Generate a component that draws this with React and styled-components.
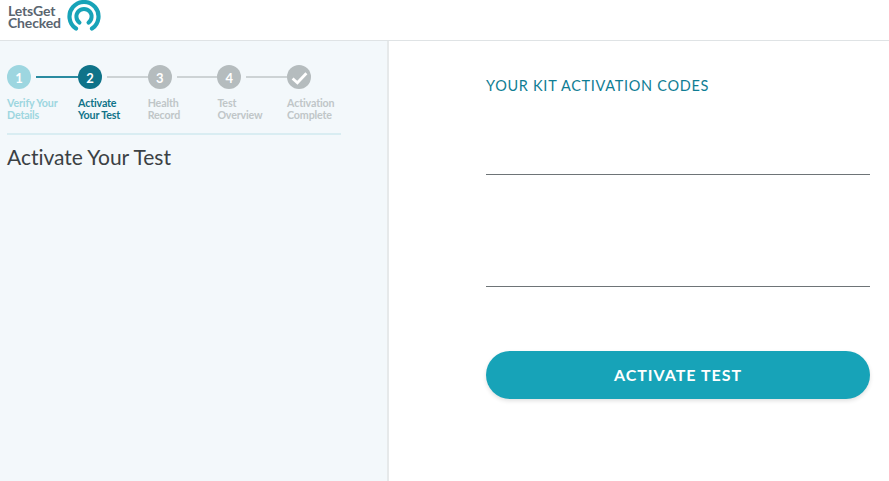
import React from "react";
import styled, { createGlobalStyle } from "styled-components";

const steps = [
  { label: ["Verify Your", "Details"], mark: "1", state: "done" },
  { label: ["Activate", "Your Test"], mark: "2", state: "active" },
  { label: ["Health", "Record"], mark: "3", state: "todo" },
  { label: ["Test", "Overview"], mark: "4", state: "todo" },
  { label: ["Activation", "Complete"], mark: "check", state: "todo" },
];

const circleColors = { done: "#9dd6e0", active: "#0f7389", todo: "#b5bcbe" };
const labelColors = { done: "#9dd6e0", active: "#0f7389", todo: "#c0c6c8" };

export default function App() {
  return (
    <Page>
      <GlobalStyle />
      <Header>
        <LogoText>
          <span>LetsGet</span>
          <span>Checked</span>
        </LogoText>
        <LogoMark viewBox="0 0 34 32" aria-hidden="true">
          <path
            d="M9 28.6 A14.5 14.5 0 1 1 25 28.6"
            fill="none"
            stroke="#17a3b8"
            strokeWidth="4.2"
            strokeLinecap="round"
          />
          <path
            d="M12.5 22.6 A7.6 7.6 0 1 1 21.5 22.6"
            fill="none"
            stroke="#17a3b8"
            strokeWidth="4"
            strokeLinecap="round"
          />
        </LogoMark>
      </Header>
      <Main>
        <Sidebar>
          <Stepper>
            {steps.map((step, i) => (
              <Step key={step.mark}>
                <CircleRow>
                  <Circle $state={step.state}>
                    {step.mark === "check" ? (
                      <svg width="17" height="14" viewBox="0 0 16 13" aria-hidden="true">
                        <path
                          d="M1.5 7 L6 11 L14.5 2"
                          fill="none"
                          stroke="#fff"
                          strokeWidth="2.6"
                        />
                      </svg>
                    ) : (
                      step.mark
                    )}
                  </Circle>
                  {i < steps.length - 1 && <Connector $done={step.state === "done"} />}
                </CircleRow>
                <StepLabel $state={step.state}>
                  {step.label[0]}
                  <br />
                  {step.label[1]}
                </StepLabel>
              </Step>
            ))}
          </Stepper>
          <Title>Activate Your Test</Title>
        </Sidebar>
        <Content>
          <CodesTitle>YOUR KIT ACTIVATION CODES</CodesTitle>
          <CodeField />
          <CodeField />
          <ActivateButton>ACTIVATE TEST</ActivateButton>
        </Content>
      </Main>
    </Page>
  );
}

const GlobalStyle = createGlobalStyle`
  html, body {
    margin: 0;
    padding: 0;
    background: #fff;
  }
  * {
    box-sizing: border-box;
  }
`;

const Page = styled.div`
  width: 889px;
  height: 481px;
  overflow: hidden;
  display: flex;
  flex-direction: column;
  font-family: "Lato", "Noto Sans", sans-serif;
`;

const Header = styled.header`
  height: 41px;
  flex: none;
  display: flex;
  align-items: flex-start;
  gap: 7px;
  padding-left: 8px;
  background: #fff;
  border-bottom: 1px solid #dfe3e5;
`;

const LogoText = styled.div`
  width: 52px;
  display: flex;
  flex-direction: column;
  margin-top: 5px;
  font-size: 14px;
  line-height: 12px;
  font-weight: 700;
  letter-spacing: -0.15px;
  color: #5a6570;
`;

const LogoMark = styled.svg`
  width: 34px;
  height: 32px;
  flex: none;
`;

const Main = styled.main`
  flex: 1;
  display: flex;
`;

const Sidebar = styled.aside`
  width: 389px;
  flex: none;
  padding: 24px 0 0 7px;
  background: #f3f8fb;
  border-right: 2px solid #e6e9ea;
`;

const Stepper = styled.div`
  width: 334px;
  height: 70px;
  display: flex;
  border-bottom: 2px solid #d9edf2;
`;

const Step = styled.div`
  width: 69.7px;
  flex: none;
  &:first-child {
    width: 71px;
  }
`;

const CircleRow = styled.div`
  display: flex;
  align-items: center;
  gap: 5px;
`;

const Circle = styled.div`
  width: 24px;
  height: 24px;
  flex: none;
  border-radius: 50%;
  display: flex;
  align-items: center;
  justify-content: center;
  padding-top: 1px;
  background: ${(p) => circleColors[p.$state]};
  color: #fff;
  font-size: 13px;
  font-weight: 700;
`;

const Connector = styled.div`
  flex: 1;
  height: ${(p) => (p.$done ? "2px" : "1.5px")};
  background: ${(p) => (p.$done ? "#2a8ba0" : "#cdd3d5")};
`;

const StepLabel = styled.div`
  margin-top: 8px;
  font-size: 10.7px;
  line-height: 12px;
  font-weight: 700;
  letter-spacing: -0.15px;
  white-space: nowrap;
  color: ${(p) => labelColors[p.$state]};
`;

const Title = styled.h1`
  margin: 8px 0 0;
  font-size: 21px;
  line-height: 28px;
  font-weight: 400;
  letter-spacing: -0.03px;
  color: #3b4144;
`;

const Content = styled.section`
  flex: 1;
  display: flex;
  flex-direction: column;
  padding: 36px 19px 0 97px;
`;

const CodesTitle = styled.h2`
  margin: 0;
  font-size: 14.5px;
  line-height: 18px;
  font-weight: 400;
  letter-spacing: 0.7px;
  color: #0f7d94;
`;

const CodeField = styled.div`
  height: 112px;
  flex: none;
  border-bottom: 1px solid #6e7477;
  &:first-of-type {
    height: 80px;
  }
`;

const ActivateButton = styled.button`
  height: 48px;
  margin-top: 64px;
  flex: none;
  border: none;
  border-radius: 24px;
  padding: 0 0 2px;
  background: #17a3b8;
  box-shadow: 0 2px 4px rgba(0, 0, 0, 0.12);
  color: #fff;
  font-family: inherit;
  font-size: 16px;
  font-weight: 700;
  letter-spacing: 1px;
`;
